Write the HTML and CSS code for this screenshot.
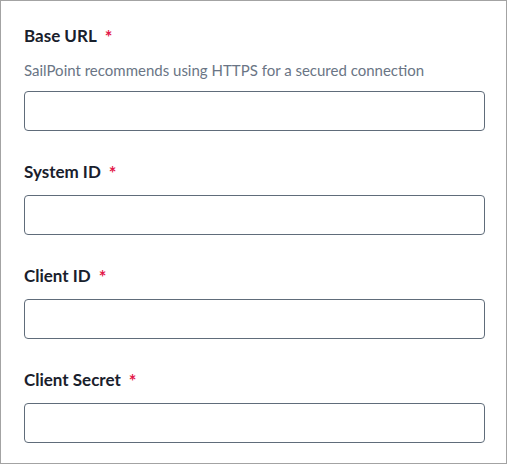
FILE: index.html
```html
<!DOCTYPE html>
<html lang="en">
<head>
<meta charset="utf-8">
<title>Connection settings</title>
<link rel="stylesheet" href="styles.css">
</head>
<body>
<div class="panel">
  <div class="field">
    <label class="label" for="base-url">Base URL<span class="req">*</span></label>
    <div class="help">SailPoint recommends using HTTPS for a secured connection</div>
    <input class="input" id="base-url" type="text">
  </div>
  <div class="field">
    <label class="label" for="system-id">System ID<span class="req">*</span></label>
    <input class="input" id="system-id" type="text">
  </div>
  <div class="field">
    <label class="label" for="client-id">Client ID<span class="req">*</span></label>
    <input class="input" id="client-id" type="text">
  </div>
  <div class="field">
    <label class="label" for="client-secret">Client Secret<span class="req">*</span></label>
    <input class="input" id="client-secret" type="text">
  </div>
</div>
</body>
</html>
```
FILE: styles.css
```css
html, body {
  margin: 0;
  padding: 0;
  background: #ffffff;
}
.panel {
  box-sizing: border-box;
  width: 507px;
  height: 464px;
  border: 1px solid #a3a3a3;
  padding: 23px 21px 0 23px;
  display: flex;
  flex-direction: column;
  gap: 29px;
  font-family: Lato, "Noto Sans", sans-serif;
}
.field {
  display: flex;
  flex-direction: column;
}
.label {
  font-size: 17px;
  line-height: 24px;
  font-weight: 700;
  color: #19202c;
  margin-bottom: 11px;
}
.req {
  color: #e3174a;
  font-size: 18px;
  font-weight: 700;
  line-height: 0;
  margin-left: 8px;
  position: relative;
  top: 2px;
}
.help {
  font-size: 15px;
  line-height: 22px;
  color: #6a7585;
  margin-top: 0;
  margin-bottom: 10px;
}
.input {
  box-sizing: border-box;
  height: 40px;
  width: 461px;
  border: 1px solid #606c7a;
  border-radius: 4px;
  padding: 0 12px;
  margin: 0;
  background: #fff;
  font: inherit;
  outline: none;
}
```
